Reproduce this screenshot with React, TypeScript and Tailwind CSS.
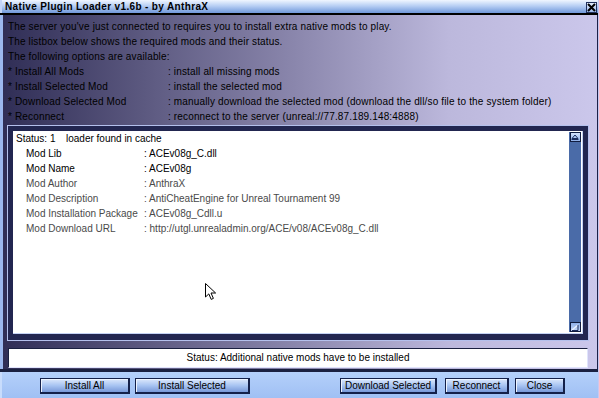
import React from "react";

const rowsTop: [string, string][] = [
  ["* Install All Mods", ": install all missing mods"],
  ["* Install Selected Mod", ": install the selected mod"],
  ["* Download Selected Mod", ": manually download the selected mod (download the dll/so file to the system folder)"],
  ["* Reconnect", ": reconnect to the server (unreal://77.87.189.148:4888)"],
];

const modRows: { label: string; value: string; dark: boolean }[] = [
  { label: "Mod Lib", value: "ACEv08g_C.dll", dark: true },
  { label: "Mod Name", value: "ACEv08g", dark: true },
  { label: "Mod Author", value: "AnthraX", dark: false },
  { label: "Mod Description", value: "AntiCheatEngine for Unreal Tournament 99", dark: false },
  { label: "Mod Installation Package", value: "ACEv08g_Cdll.u", dark: false },
  { label: "Mod Download URL", value: "http://utgl.unrealadmin.org/ACE/v08/ACEv08g_C.dll", dark: false },
];

function Btn({ label, className }: { label: string; className: string }) {
  return (
    <div
      className={`h-[16px] flex items-center justify-center border border-[#14204a] border-r-2 border-b-2 bg-[linear-gradient(to_bottom,#dce8fc,#a8c4f2_50%,#7898d8)] shadow-[inset_1px_1px_0_#eef4ff] text-[10px] leading-none whitespace-nowrap ${className}`}
    >
      {label}
    </div>
  );
}

export default function App() {
  return (
    <div className="w-[599px] h-[398px] flex flex-col overflow-hidden bg-[#101630] border-r border-[#c8c8f0] font-[family-name:'Liberation_Sans',Arial,sans-serif] text-black">
      {/* Title bar */}
      <div className="h-[13px] flex items-center border-l-2 border-[#c4d6f8] bg-[linear-gradient(to_bottom,#f0f6ff,#b8cff4_45%,#7098da)]">
        <span className="pl-[3px] text-[10px] font-bold tracking-[0.35px] leading-[13px] whitespace-nowrap">
          Native Plugin Loader v1.6b - by AnthraX
        </span>
        <div className="ml-auto mr-px w-[11px] h-[11px] mt-[1px] border border-[#20305c] bg-[linear-gradient(to_bottom,#e4eeff,#9cb8ec)] flex items-center justify-center">
          <svg width="9" height="9" viewBox="0 0 9 9">
            <path d="M1 1 L8 8 M8 1 L1 8" stroke="#000" strokeWidth="2" />
          </svg>
        </div>
      </div>
      <div className="h-[2px] bg-black" />

      {/* Body */}
      <div className="h-[354px] flex flex-col border-l-[3px] border-l-[#9cb8ee] border-r border-r-[#1c2048] bg-[linear-gradient(to_right,#302e56,#8c88ae_50%,#bcb8dc_75%,#cbc7eb)]">
        <div className="pt-[4px] pl-[5px] text-[10px] leading-[15px] tracking-[0.15px] whitespace-nowrap">
          <div>The server you've just connected to requires you to install extra native mods to play.</div>
          <div>The listbox below shows the required mods and their status.</div>
          <div>The following options are available:</div>
          {rowsTop.map(([a, b]) => (
            <div key={a} className="flex">
              <span className="w-[160px] shrink-0">{a}</span>
              <span>{b}</span>
            </div>
          ))}
        </div>

        {/* Listbox */}
        <div className="mt-[1px] ml-[4px] w-[582px] h-[216px] border border-[#b4c0ec] bg-[#222650] pt-[5px] pl-[5px] pr-[5px] pb-[6px]">
          <div className="relative w-full h-full bg-white flex border-r border-b border-[#c4d2f4]">
            <div className="flex-1 pl-[3px] text-[10px] leading-[15px] whitespace-nowrap">
              <div className="flex">
                <span className="w-[50px]">Status: 1</span>
                <span>loader found in cache</span>
              </div>
              {modRows.map((r) => (
                <div key={r.label} className={`flex pl-[10px] ${r.dark ? "text-black" : "text-[#4a4a4a]"}`}>
                  <span className="w-[118px] shrink-0">{r.label}</span>
                  <span>: {r.value}</span>
                </div>
              ))}
            </div>
            {/* Scrollbar */}
            <div className="w-[12px] mt-px mb-px mr-px bg-[#4a6ba8] flex flex-col justify-between items-center">
              <div className="w-[11px] h-[10px] border border-[#101c40] bg-[linear-gradient(to_bottom,#d4e2fc,#90b0e8)] flex items-center justify-center">
                <svg width="8" height="6" viewBox="0 0 8 6">
                  <path d="M1 4.5 L4 1 L7 4.5 Z" fill="none" stroke="#1c2c5c" strokeWidth="1" />
                  <path d="M0.5 5.5 H7.5" stroke="#1c2c5c" strokeWidth="1" />
                </svg>
              </div>
              <div className="w-[11px] h-[10px] border border-[#101c40] bg-[linear-gradient(to_bottom,#90b0e8,#c4d6f8)] flex items-center justify-center">
                <svg width="8" height="7" viewBox="0 0 8 7">
                  <path d="M1 6 L7 1" stroke="#eef4ff" strokeWidth="1.2" />
                  <path d="M1 6.5 H7 V1" fill="none" stroke="#1c2c5c" strokeWidth="1" />
                </svg>
              </div>
            </div>
            {/* Mouse cursor */}
            <svg className="absolute left-[192px] top-[152px]" width="12" height="18" viewBox="0 0 12 18">
              <path
                d="M0.5 0.5 L0.5 14 L3.8 10.9 L6.2 16.4 L8.4 15.4 L6 10 L10.6 10 Z"
                fill="#fff"
                stroke="#000"
                strokeWidth="1"
                strokeLinejoin="miter"
              />
            </svg>
          </div>
        </div>

        {/* Status box */}
        <div className="mt-[7px] ml-[5px] w-[580px] h-[20px] border-t border-l border-t-[#1a2040] border-l-[#1a2040] border-b border-r border-b-[#e0e4fc] border-r-[#e0e4fc] bg-white flex items-center justify-center text-[10px] leading-none whitespace-nowrap">
          Status: Additional native mods have to be installed
        </div>
      </div>
      <div className="h-[3px] bg-[#1a2040]" />

      {/* Bottom bar */}
      <div className="flex-1 flex items-start pt-[6px] pl-[38px] border-l-2 border-[#c8dcfc] bg-[linear-gradient(to_bottom,#b4d0fa,#a0c0f4)]">
        <Btn label="Install All" className="w-[90px]" />
        <Btn label="Install Selected" className="w-[115px] ml-[5px]" />
        <Btn label="Download Selected" className="w-[97px] ml-[90px]" />
        <Btn label="Reconnect" className="w-[64px] ml-[8px]" />
        <Btn label="Close" className="w-[50px] ml-[6px]" />
      </div>
    </div>
  );
}
